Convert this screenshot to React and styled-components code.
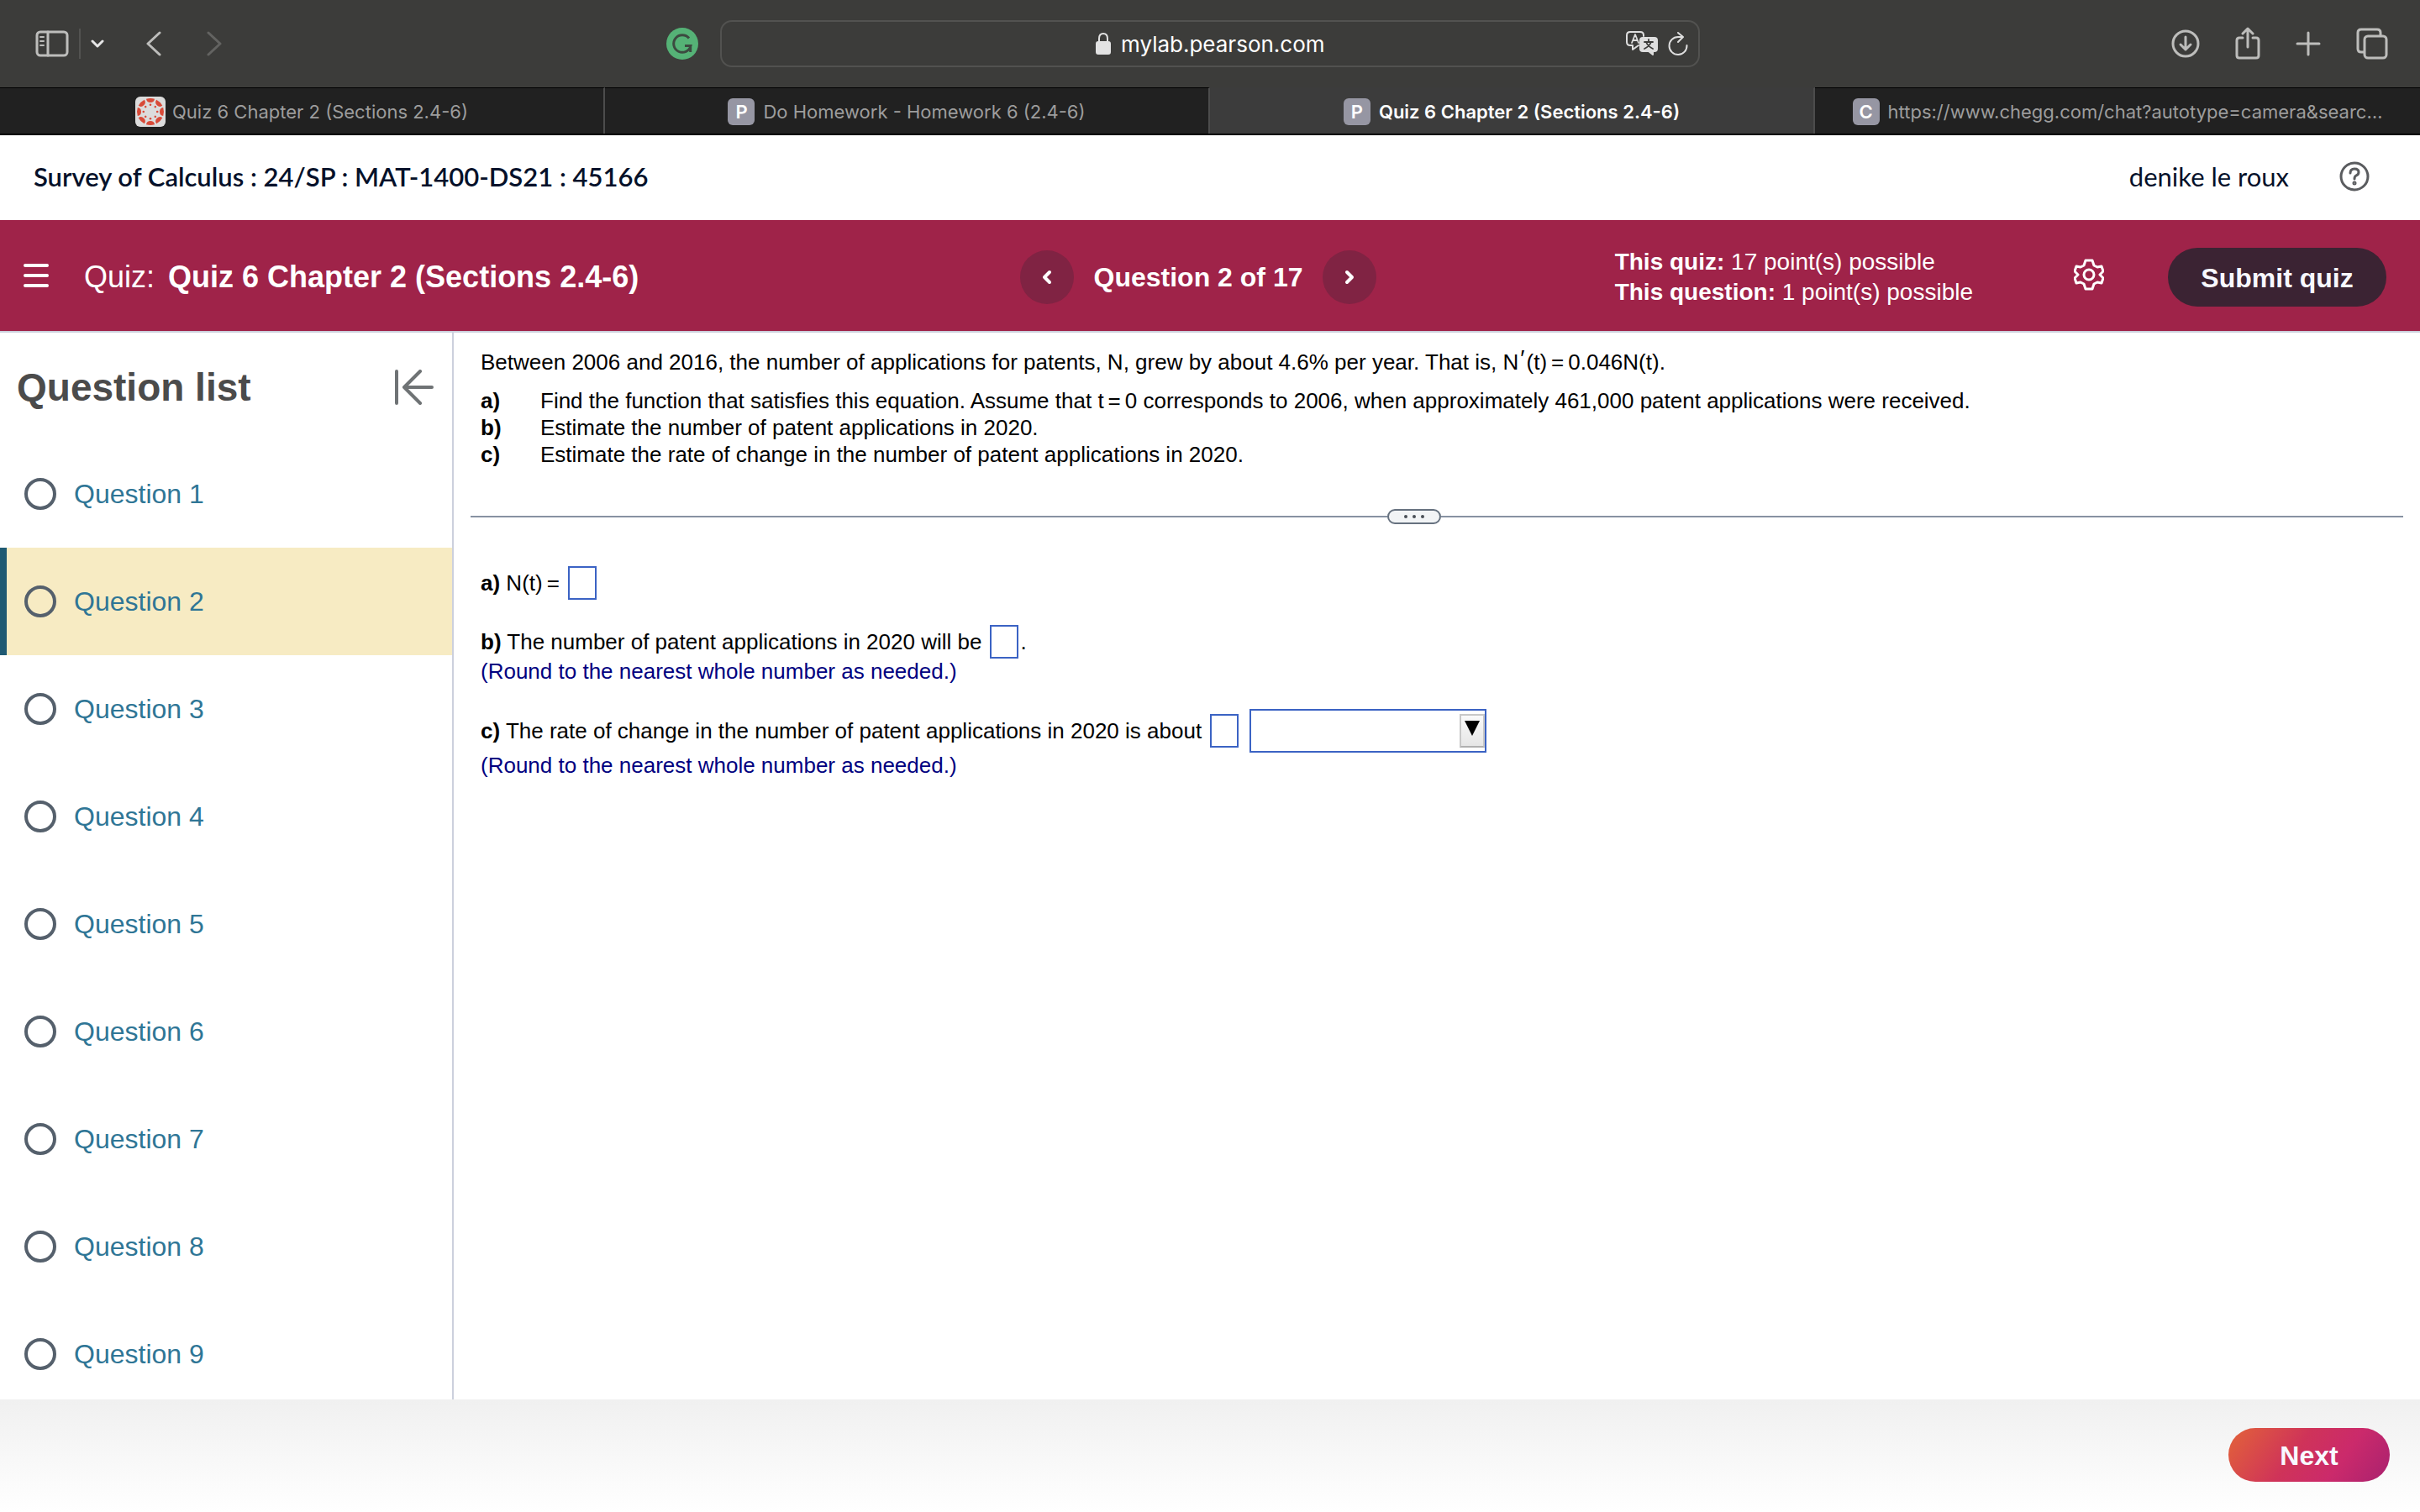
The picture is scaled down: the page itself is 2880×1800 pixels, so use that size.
import { useState } from "react";
import styled, { createGlobalStyle } from "styled-components";

const GlobalStyle = createGlobalStyle`
  * {
    box-sizing: border-box;
  }

  body {
    margin: 0;
    background: #fff;
    color: #000;
    font-family: "Liberation Sans", Arial, sans-serif;
  }

  button, input, select {
    font: inherit;
    color: inherit;
  }

  svg {
    display: block;
    flex: none;
  }
`;

const Page = styled.div`
  display: flex;
  flex-direction: column;
  height: 100vh;
  overflow: hidden;
`;

/* ---------- browser ---------- */

const Toolbar = styled.div`
  display: grid;
  grid-template-columns: 1fr minmax(600px, 1166px) 1fr;
  align-items: center;
  flex: none;
  height: 104px;
  background: #3c3c3a;
  color: #bdbdbb;
`;

const ToolGroup = styled.div`
  display: flex;
  align-items: center;
  justify-content: ${(props) => (props.$end ? "flex-end" : "flex-start")};
  gap: ${(props) => props.$gap || 0}px;
  padding: ${(props) => (props.$end ? "0 38px 0 0" : "0 26px 0 42px")};
`;

const IconButton = styled.button`
  display: flex;
  align-items: center;
  justify-content: center;
  padding: 0;
  border: 0;
  background: none;
  color: ${(props) => props.$color || "inherit"};
  cursor: pointer;
`;

const ToolDivider = styled.span`
  width: 2px;
  height: 36px;
  margin: 0 12px;
  background: #535351;
`;

const HistoryButtons = styled.div`
  display: flex;
  gap: 54px;
  margin: 0 auto 0 50px;
`;

const AddressBar = styled.div`
  display: grid;
  grid-template-columns: 1fr auto 1fr;
  align-items: center;
  height: 56px;
  border: 2px solid #525250;
  border-radius: 14px;
  padding: 0 10px;
`;

const Address = styled.label`
  grid-column: 2;
  display: flex;
  align-items: center;
  gap: 12px;
  color: #e2e2e2;
`;

const AddressInput = styled.input`
  width: 242px;
  height: 40px;
  padding: 0;
  border: 0;
  outline: 0;
  background: none;
  color: #fff;
  font-family: Inter, sans-serif;
  font-size: 26px;
`;

const AddressTools = styled.div`
  display: flex;
  justify-content: flex-end;
  gap: 12px;
  padding-right: 2px;
  color: #dedede;
`;

const TabBar = styled.nav`
  display: grid;
  grid-template-columns: repeat(4, 1fr);
  flex: none;
  height: 57px;
  border-bottom: 2px solid #000;
  background: #212121;
`;

const Tab = styled.a`
  display: flex;
  align-items: center;
  justify-content: center;
  gap: ${(props) => (props.$wide ? 8 : 10)}px;
  padding-top: 1px;
  border-top: 1px solid ${(props) => (props.$active ? "#3c3c3c" : "#000")};
  border-right: 2px solid #4c4c4c;
  background: ${(props) => (props.$active ? "#3c3c3c" : "#212121")};
  color: ${(props) => (props.$active ? "#fff" : "#9d9d9d")};
  font-family: Inter, sans-serif;
  font-size: 22px;
  font-weight: ${(props) => (props.$active ? 600 : 400)};
  text-decoration: none;
  white-space: nowrap;

  &:last-child {
    border-right: 0;
  }
`;

const Favicon = styled.span`
  display: flex;
  align-items: center;
  justify-content: center;
  width: 32px;
  height: 32px;
  border-radius: 6px;
  background: #9696a3;
  color: #fff;
  font-size: 22px;
  font-weight: 600;
`;

/* ---------- course header ---------- */

const CourseHeader = styled.header`
  display: flex;
  align-items: center;
  justify-content: space-between;
  flex: none;
  height: 101px;
  padding: 0 60px 4px 40px;
  color: #05112a;
  font-family: Lato, sans-serif;
  font-size: 31px;
`;

const CourseName = styled.h1`
  margin: 0;
  font-size: 31px;
  font-weight: 600;
`;

const UserArea = styled.div`
  display: flex;
  align-items: center;
  gap: 60px;
`;

const QuizBar = styled.div`
  display: grid;
  grid-template-columns: 1fr auto 1fr;
  align-items: center;
  flex: none;
  height: 134px;
  padding: 4px 40px 0 12px;
  border-bottom: 2px solid #ccd0dd;
  background: #9f2349;
  color: #fff;
`;

const QuizTitle = styled.div`
  display: flex;
  align-items: center;
  gap: 16px;
  padding-left: 16px;
  font-size: 36px;
  white-space: nowrap;
`;

const MenuButton = styled(IconButton)`
  margin-right: 26px;
  padding-bottom: 4px;
`;

const QuestionNav = styled.div`
  display: flex;
  align-items: center;
  gap: 24px;
  font-size: 32px;
  font-weight: 700;
`;

const RoundButton = styled(IconButton)`
  width: 64px;
  height: 64px;
  border-radius: 50%;
  background: #802343;
`;

const QuizTools = styled.div`
  display: flex;
  align-items: center;
  justify-content: flex-end;
`;

const Points = styled.div`
  font-size: 28px;
  line-height: 36px;
  white-space: nowrap;
`;

const SettingsButton = styled(IconButton)`
  margin: 0 76px 0 120px;
  padding-bottom: 6px;
`;

const PillButton = styled.button`
  flex: none;
  width: ${(props) => props.$width}px;
  height: ${(props) => props.$height}px;
  padding: 2px 0 0;
  border: 0;
  border-radius: 35px;
  background: ${(props) => props.$background};
  color: #f8f8ff;
  font-size: 32px;
  font-weight: 700;
  cursor: pointer;
`;

/* ---------- body ---------- */

const Body = styled.div`
  display: flex;
  flex: 1;
  min-height: 0;
`;

const Sidebar = styled.aside`
  flex: none;
  width: 540px;
  overflow: hidden;
  border-right: 2px solid #ccd0dd;
`;

const SidebarHead = styled.div`
  display: flex;
  align-items: center;
  justify-content: space-between;
  height: 128px;
  padding: 2px 22px 0 20px;
  color: #4b4b4b;
`;

const SidebarTitle = styled.h2`
  margin: 0;
  font-size: 46px;
  font-weight: 700;
`;

const QuestionList = styled.ul`
  margin: 0;
  padding: 0;
  list-style: none;
`;

const QuestionLink = styled.a`
  display: flex;
  align-items: center;
  gap: 21px;
  height: 128px;
  padding-left: 21px;
  border-left: 8px solid ${(props) => (props.$current ? "#1f5a73" : "transparent")};
  background: ${(props) => (props.$current ? "#f7ebc3" : "transparent")};
  color: #2f7696;
  font-size: 32px;
  text-decoration: none;
`;

const StatusCircle = styled.span`
  width: 38px;
  height: 38px;
  border: 4px solid #55606c;
  border-radius: 50%;
`;

const Exercise = styled.main`
  flex: 1;
  min-width: 0;
  padding: 19px 20px 0;
  font-size: 26px;
  line-height: 32px;
`;

const Problem = styled.section`
  padding-left: 12px;
`;

const Intro = styled.p`
  margin: 0 0 14px;
`;

const Part = styled.div`
  display: grid;
  grid-template-columns: 71px 1fr;
`;

const Eq = styled.span`
  margin: 0 5px;

  label > &:last-child {
    margin-right: 0;
  }
`;

const Prime = styled.sup`
  margin: 0 2px;
  font-size: 28px;
  line-height: 0;
  vertical-align: 4px;
`;

const Divider = styled.div`
  display: flex;
  align-items: center;
  margin: 49px 0 50px;

  &::before,
  &::after {
    content: "";
    flex: 20;
    height: 2px;
    background: #8792a2;
  }

  &::after {
    flex: 21;
  }
`;

const DragHandle = styled.button`
  display: flex;
  align-items: center;
  justify-content: center;
  gap: 6px;
  width: 64px;
  height: 18px;
  padding: 0;
  border: 2px solid #66717f;
  border-radius: 9px;
  background: #f2f4f6;
`;

const Dot = styled.span`
  width: 4px;
  height: 4px;
  border-radius: 50%;
  background: #4a4f57;
`;

const Answers = styled.section`
  display: flex;
  flex-direction: column;
  gap: 30px;
  padding-left: 12px;
`;

const AnswerRow = styled.div`
  display: flex;
  align-items: center;
  white-space: pre;
`;

const AnswerBox = styled.input`
  width: 34px;
  height: 40px;
  margin: 0 2px 0 10px;
  padding: 0 4px;
  border: 2px solid #3b63c4;
  outline: 0;
  background: #fff;
`;

const SelectWrap = styled.span`
  display: grid;
  grid-template-columns: 1fr 30px;
  align-items: center;
  width: 282px;
  height: 52px;
  margin-left: 11px;
  border: 2px solid #3b63c4;
`;

const UnitSelect = styled.select`
  grid-column: 1 / 3;
  grid-row: 1;
  width: 100%;
  height: 48px;
  padding: 0 34px 0 8px;
  border: 0;
  outline: 0;
  appearance: none;
  background: transparent;
`;

const SelectArrow = styled.span`
  grid-column: 2;
  grid-row: 1;
  display: flex;
  justify-content: center;
  height: 40px;
  padding-top: 6px;
  border: 2px solid #c8c8c8;
  border-bottom-color: #b0b0b0;
  background: linear-gradient(#fafafa, #e6e6e6);
  pointer-events: none;
`;

const Hint = styled.p`
  margin: 0;
  color: #000080;
  line-height: 30px;
`;

const Footer = styled.footer`
  display: flex;
  justify-content: flex-end;
  flex: none;
  height: 134px;
  padding: 34px 36px 0;
  background: linear-gradient(#f0f0f0, #fff);
`;

/* ---------- icons ---------- */

const Icon = ({ w, h, stroke = 3, children }) => (
  <svg
    width={w}
    height={h}
    viewBox={`0 0 ${w} ${h}`}
    fill="none"
    stroke="currentColor"
    strokeWidth={stroke}
    strokeLinecap="round"
    strokeLinejoin="round"
    aria-hidden="true"
  >
    {children}
  </svg>
);

const CanvasLogo = () => (
  <svg width="36" height="36" viewBox="0 0 36 36" aria-hidden="true">
    <rect width="36" height="36" rx="6" fill="#dcdcdc" />
    {[0, 45, 90, 135, 180, 225, 270, 315].map((angle) => (
      <g key={angle} transform={`rotate(${angle} 18 18)`} fill="#d84a38">
        <path d="M13 2.8 Q18 1.2 23 2.8 Q22.4 7 18 7 Q13.6 7 13 2.8Z" />
        <circle cx="18" cy="9.8" r="1.3" />
      </g>
    ))}
  </svg>
);

const GrammarlyLogo = () => (
  <svg width="38" height="38" viewBox="0 0 38 38" aria-hidden="true">
    <circle cx="19" cy="19" r="19" fill="#55b276" />
    <path
      d="M27 12.5 A10.3 10.3 0 1 0 29 21.5 H22 M28.7 21.5 V29"
      fill="none"
      stroke="#3c4a40"
      strokeWidth="3"
    />
  </svg>
);

const TranslateIcon = () => (
  <svg width="38" height="30" viewBox="0 0 38 30" fill="none" stroke="currentColor" strokeWidth="2" strokeLinecap="round" strokeLinejoin="round" aria-hidden="true">
    <path d="M15 17 L8 22 V17 H5 Q1 17 1 13 V5 Q1 1 5 1 H17 Q21 1 21 5 V6" />
    <path d="M7 14 L11 4 L15 14 M8.5 11 H13.5" strokeWidth="1.8" />
    <path d="M20 8 H34 Q37 8 37 11 V21 Q37 24 34 24 H32 V28 L27 24 H20 Q17 24 17 21 V11 Q17 8 20 8Z" fill="currentColor" />
    <path d="M27 10 V12 M22 13 H32 M30 13 Q28 18 22 21 M24 13 Q26 18 32 21" stroke="#3c3c3a" strokeWidth="1.8" />
  </svg>
);

const tabs = [
  { title: "Quiz 6 Chapter 2 (Sections 2.4-6)", canvas: true },
  { title: "Do Homework - Homework 6 (2.4-6)", letter: "P" },
  { title: "Quiz 6 Chapter 2 (Sections 2.4-6)", letter: "P", active: true },
  { title: "https://www.chegg.com/chat?autotype=camera&searc…", letter: "C" },
];

const Browser = () => {
  const [address, setAddress] = useState("mylab.pearson.com");

  return (
    <>
      <Toolbar>
        <ToolGroup>
          <IconButton aria-label="Sidebar">
            <Icon w={40} h={32}>
              <rect x="2" y="2" width="36" height="28" rx="4" />
              <path d="M15 2 V30" />
              <path d="M6 8 H10 M6 13 H10 M6 18 H10" strokeWidth="2" />
            </Icon>
          </IconButton>
          <ToolDivider />
          <IconButton aria-label="Tab groups" $color="#e6e6e6">
            <Icon w={16} h={12}>
              <path d="M2 3 L8 9 L14 3" />
            </Icon>
          </IconButton>
          <HistoryButtons>
            <IconButton aria-label="Back">
              <Icon w={18} h={30}>
                <path d="M16 2 L2 15 L16 28" />
              </Icon>
            </IconButton>
            <IconButton aria-label="Forward" $color="#636361">
              <Icon w={18} h={30}>
                <path d="M2 2 L16 15 L2 28" />
              </Icon>
            </IconButton>
          </HistoryButtons>
          <IconButton aria-label="Grammarly">
            <GrammarlyLogo />
          </IconButton>
        </ToolGroup>
        <AddressBar>
          <Address>
            <Icon w={18} h={26} stroke={2}>
              <rect x="1" y="11" width="16" height="14" rx="2" fill="currentColor" />
              <path d="M4 11 V7 Q4 1 9 1 Q14 1 14 7 V11" />
            </Icon>
            <AddressInput
              aria-label="Address"
              value={address}
              onChange={(e) => setAddress(e.target.value)}
            />
          </Address>
          <AddressTools>
            <IconButton aria-label="Translate">
              <TranslateIcon />
            </IconButton>
            <IconButton aria-label="Reload">
              <Icon w={24} h={30} stroke={2}>
                <path d="M17 7 H12 A10.5 10.5 0 1 0 22.5 17" />
                <path d="M12 2 L18 7 L12 13" />
              </Icon>
            </IconButton>
          </AddressTools>
        </AddressBar>
        <ToolGroup $end $gap={42}>
          <IconButton aria-label="Downloads">
            <Icon w={34} h={34}>
              <circle cx="17" cy="17" r="15" />
              <path d="M17 9 V24 M11 18 L17 24 L23 18" />
            </Icon>
          </IconButton>
          <IconButton aria-label="Share">
            <Icon w={30} h={40}>
              <path d="M9 13 H5 Q2 13 2 16 V34 Q2 37 5 37 H25 Q28 37 28 34 V16 Q28 13 25 13 H21" />
              <path d="M15 24 V3 M9 8 L15 2 L21 8" />
            </Icon>
          </IconButton>
          <IconButton aria-label="New tab">
            <Icon w={30} h={30}>
              <path d="M15 2 V28 M2 15 H28" />
            </Icon>
          </IconButton>
          <IconButton aria-label="All tabs">
            <Icon w={38} h={38}>
              <path d="M9 29 H6 Q2 29 2 25 V6 Q2 2 6 2 H25 Q29 2 29 6 V9" />
              <rect x="10" y="10" width="26" height="26" rx="4" />
            </Icon>
          </IconButton>
        </ToolGroup>
      </Toolbar>
      <TabBar>
        {tabs.map((tab, index) => (
          <Tab key={index} href="#" $active={tab.active} $wide={tab.canvas}>
            {tab.canvas ? <CanvasLogo /> : <Favicon>{tab.letter}</Favicon>}
            {tab.title}
          </Tab>
        ))}
      </TabBar>
    </>
  );
};

const QuizHeader = () => (
  <>
    <CourseHeader>
      <CourseName>Survey of Calculus : 24/SP : MAT-1400-DS21 : 45166</CourseName>
      <UserArea>
        <span>denike le roux</span>
        <IconButton aria-label="Help" $color="#5a5c5f">
          <Icon w={36} h={36}>
            <circle cx="18" cy="18" r="16" />
            <path d="M13 14 Q13 9 18 9 Q23 9 23 13 Q23 16 20 17 Q18 18 18 21" />
            <circle cx="18" cy="26" r="1" />
          </Icon>
        </IconButton>
      </UserArea>
    </CourseHeader>
    <QuizBar>
      <QuizTitle>
        <MenuButton aria-label="Menu">
          <Icon w={30} h={30} stroke={4}>
            <path d="M2 3 H28 M2 15 H28 M2 27 H28" />
          </Icon>
        </MenuButton>
        <span>Quiz:</span>
        <b>Quiz 6 Chapter 2 (Sections 2.4-6)</b>
      </QuizTitle>
      <QuestionNav>
        <RoundButton aria-label="Previous question">
          <Icon w={12} h={18} stroke={4}>
            <path d="M9 3 L3 9 L9 15" />
          </Icon>
        </RoundButton>
        Question 2 of 17
        <RoundButton aria-label="Next question">
          <Icon w={12} h={18} stroke={4}>
            <path d="M3 3 L9 9 L3 15" />
          </Icon>
        </RoundButton>
      </QuestionNav>
      <QuizTools>
        <Points>
          <div><b>This quiz:</b> 17 point(s) possible</div>
          <div><b>This question:</b> 1 point(s) possible</div>
        </Points>
        <SettingsButton aria-label="Settings">
          <Icon w={36} h={38} stroke={3}>
            <path d="M14 2 H22 L24 8 L28 10 L33 9 L35 15 L31 19 L35 23 L33 29 L28 28 L24 30 L22 36 H14 L12 30 L8 28 L3 29 L1 23 L5 19 L1 15 L3 9 L8 10 L12 8Z" />
            <circle cx="18" cy="19" r="6" />
          </Icon>
        </SettingsButton>
        <PillButton $width={260} $height={70} $background="#3b2333">Submit quiz</PillButton>
      </QuizTools>
    </QuizBar>
  </>
);

const QuestionSidebar = () => (
  <Sidebar>
    <SidebarHead>
      <SidebarTitle>Question list</SidebarTitle>
      <IconButton aria-label="Collapse question list" $color="#6f7375">
        <Icon w={48} h={42} stroke={4}>
          <path d="M4 2 V40 M46 21 H14 M32 2 L13 21 L32 40" />
        </Icon>
      </IconButton>
    </SidebarHead>
    <QuestionList>
      {[1, 2, 3, 4, 5, 6, 7, 8, 9].map((n) => (
        <li key={n}>
          <QuestionLink href="#" $current={n === 2}>
            <StatusCircle />
            Question {n}
          </QuestionLink>
        </li>
      ))}
    </QuestionList>
  </Sidebar>
);

const Question = () => (
  <Exercise>
    <Problem>
      <Intro>
        Between 2006 and 2016, the number of applications for patents, N, grew by about 4.6% per
        year. That is, N<Prime>′</Prime>(t)<Eq>=</Eq>0.046N(t).
      </Intro>
      <Part>
        <b>a)</b>
        <span>
          Find the function that satisfies this equation. Assume that t<Eq>=</Eq>0 corresponds to
          2006, when approximately 461,000 patent applications were received.
        </span>
      </Part>
      <Part>
        <b>b)</b>
        <span>Estimate the number of patent applications in 2020.</span>
      </Part>
      <Part>
        <b>c)</b>
        <span>Estimate the rate of change in the number of patent applications in 2020.</span>
      </Part>
    </Problem>
    <Divider>
      <DragHandle aria-label="Resize">
        <Dot />
        <Dot />
        <Dot />
      </DragHandle>
    </Divider>
    <Answers>
      <AnswerRow>
        <label htmlFor="answer-a"><b>a)</b> N(t)<Eq>=</Eq></label>
        <AnswerBox id="answer-a" />
      </AnswerRow>
      <div>
        <AnswerRow>
          <label htmlFor="answer-b"><b>b)</b> The number of patent applications in 2020 will be</label>
          <AnswerBox id="answer-b" />.
        </AnswerRow>
        <Hint>(Round to the nearest whole number as needed.)</Hint>
      </div>
      <div>
        <AnswerRow>
          <label htmlFor="answer-c"><b>c)</b> The rate of change in the number of patent applications in 2020 is about</label>
          <AnswerBox id="answer-c" />
          <SelectWrap>
            <UnitSelect aria-label="Units">
              <option></option>
              <option>applications per year.</option>
              <option>applications.</option>
            </UnitSelect>
            <SelectArrow>
              <svg width="18" height="18" viewBox="0 0 18 18" aria-hidden="true">
                <path d="M0 0 H18 L9 18Z" fill="#000" />
              </svg>
            </SelectArrow>
          </SelectWrap>
        </AnswerRow>
        <Hint>(Round to the nearest whole number as needed.)</Hint>
      </div>
    </Answers>
  </Exercise>
);

const App = () => {
  return (
    <Page>
      <GlobalStyle />
      <Browser />
      <QuizHeader />
      <Body>
        <QuestionSidebar />
        <Question />
      </Body>
      <Footer>
        <PillButton
          $width={192}
          $height={64}
          $background="linear-gradient(125deg, #df5a3f 8%, #cf3359 42%, #cb2a6b 68%, #a9216f)"
        >
          Next
        </PillButton>
      </Footer>
    </Page>
  );
};

export default App;
